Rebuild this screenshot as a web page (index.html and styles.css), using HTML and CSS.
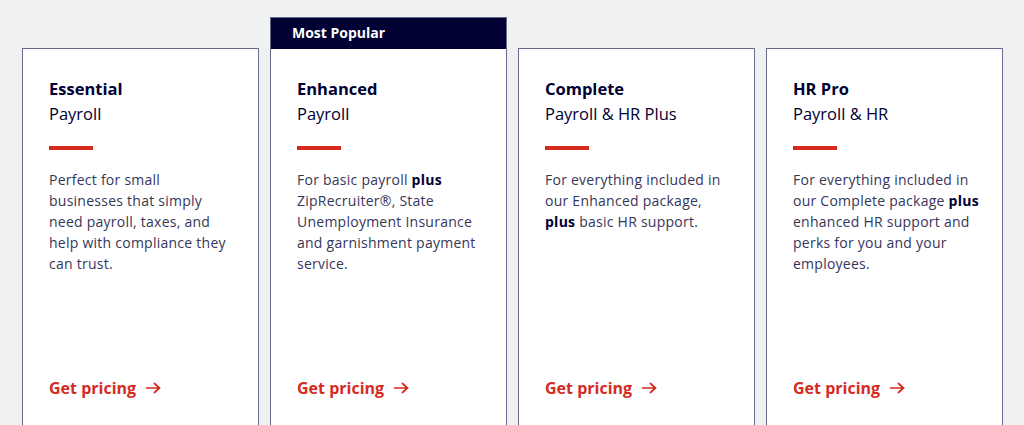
FILE: index.html
```html
<!DOCTYPE html>
<html lang="en">
<head>
<meta charset="utf-8">
<title>Plans</title>
<link rel="stylesheet" href="styles.css">
</head>
<body>
<main class="plans">
  <section class="card">
    <div class="card-body">
      <h2 class="title"><strong>Essential</strong><span>Payroll</span></h2>
      <div class="rule"></div>
      <p class="desc">Perfect for small businesses that simply need payroll, taxes, and help with compliance they can trust.</p>
      <a class="cta" href="#">Get pricing<svg class="arrow" width="16" height="12" viewBox="0 0 16 12" aria-hidden="true"><path d="M1 6H14.5M9 1L14.5 6L9 11"/></svg></a>
    </div>
  </section>
  <section class="card featured">
    <div class="badge">Most Popular</div>
    <div class="card-body">
      <h2 class="title"><strong>Enhanced</strong><span>Payroll</span></h2>
      <div class="rule"></div>
      <p class="desc">For basic payroll <b>plus</b> ZipRecruiter®, State Unemployment Insurance and garnishment payment service.</p>
      <a class="cta" href="#">Get pricing<svg class="arrow" width="16" height="12" viewBox="0 0 16 12" aria-hidden="true"><path d="M1 6H14.5M9 1L14.5 6L9 11"/></svg></a>
    </div>
  </section>
  <section class="card">
    <div class="card-body">
      <h2 class="title"><strong>Complete</strong><span>Payroll &amp; HR Plus</span></h2>
      <div class="rule"></div>
      <p class="desc">For everything included in our Enhanced package, <b>plus</b> basic HR support.</p>
      <a class="cta" href="#">Get pricing<svg class="arrow" width="16" height="12" viewBox="0 0 16 12" aria-hidden="true"><path d="M1 6H14.5M9 1L14.5 6L9 11"/></svg></a>
    </div>
  </section>
  <section class="card">
    <div class="card-body">
      <h2 class="title"><strong>HR Pro</strong><span>Payroll &amp; HR</span></h2>
      <div class="rule"></div>
      <p class="desc">For everything included in our Complete package <b>plus</b> enhanced HR support and perks for you and your employees.</p>
      <a class="cta" href="#">Get pricing<svg class="arrow" width="16" height="12" viewBox="0 0 16 12" aria-hidden="true"><path d="M1 6H14.5M9 1L14.5 6L9 11"/></svg></a>
    </div>
  </section>
</main>
</body>
</html>
```

FILE: styles.css
```css
html, body {
  margin: 0;
  padding: 0;
  background: #f0f2f2;
  font-family: "Open Sans", "Noto Sans", sans-serif;
  color: #000033;
  overflow: hidden;
  height: 425px;
}

.plans {
  display: flex;
  gap: 11px;
  padding: 17px 0 0 22px;
  align-items: flex-start;
}

.card {
  width: 237px;
  box-sizing: border-box;
  border: 1px solid #6a6a8e;
  background: #ffffff;
  margin-top: 31px;
  display: flex;
  flex-direction: column;
}

.card.featured {
  margin-top: 0;
}

.badge {
  background: #000033;
  color: #ffffff;
  font-weight: 700;
  font-size: 14px;
  height: 31px;
  line-height: 30px;
  padding-left: 21px;
}

.card-body {
  padding: 27px 22px 49px 26px;
  height: 400px;
  box-sizing: border-box;
  display: flex;
  flex-direction: column;
}

.title {
  margin: 0;
  font-size: 16.5px;
  line-height: 25px;
  font-weight: 400;
  display: flex;
  flex-direction: column;
  color: #000033;
}

.title strong {
  font-weight: 700;
}

.rule {
  width: 44px;
  height: 4px;
  background: #d42b1f;
  margin-top: 20px;
}

.desc {
  margin: 19px 0 0 0;
  font-size: 14px;
  line-height: 21px;
  letter-spacing: 0.25px;
  color: #36365a;
}

.desc b {
  font-weight: 700;
  color: #000033;
}

.cta {
  margin-top: auto;
  color: #d42b1f;
  font-weight: 700;
  font-size: 16px;
  line-height: 24px;
  text-decoration: none;
  display: flex;
  align-items: center;
}

.arrow {
  margin-left: 9px;
  fill: none;
  stroke: #d42b1f;
  stroke-width: 1.7;
}
```
